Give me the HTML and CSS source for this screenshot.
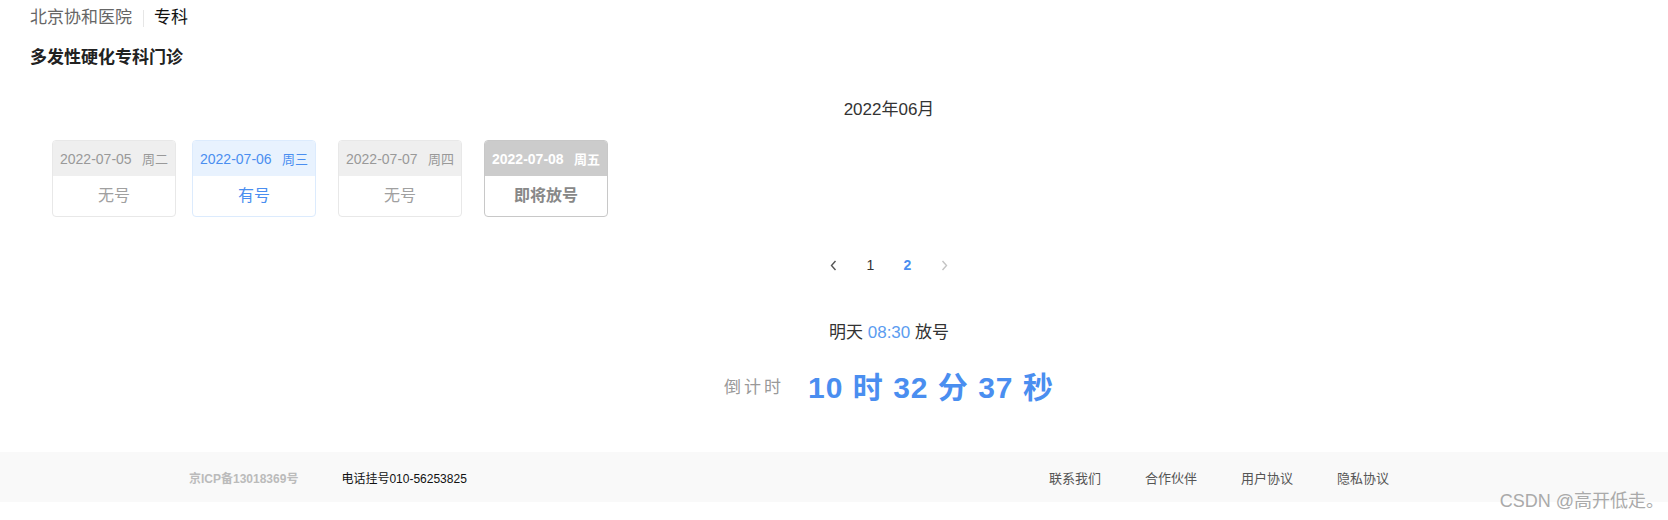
FILE: index.html
```html
<!DOCTYPE html>
<html lang="zh-CN">
<head>
<meta charset="utf-8">
<title>多发性硬化专科门诊</title>
<link rel="stylesheet" href="styles.css">
</head>
<body>
<div class="page">
  <div class="crumb">
    <span class="crumb-hosp">北京协和医院</span>
    <span class="crumb-sep"></span>
    <span class="crumb-dept">专科</span>
  </div>
  <h1 class="title">多发性硬化专科门诊</h1>

  <div class="center month">2022年06月</div>

  <div class="days">
    <div class="day off">
      <div class="day-head"><span class="date">2022-07-05</span><span class="wk">周二</span></div>
      <div class="day-body">无号</div>
    </div>
    <div class="day avail">
      <div class="day-head"><span class="date">2022-07-06</span><span class="wk">周三</span></div>
      <div class="day-body">有号</div>
    </div>
    <div class="day off">
      <div class="day-head"><span class="date">2022-07-07</span><span class="wk">周四</span></div>
      <div class="day-body">无号</div>
    </div>
    <div class="day soon">
      <div class="day-head"><span class="date">2022-07-08</span><span class="wk">周五</span></div>
      <div class="day-body">即将放号</div>
    </div>
  </div>

  <div class="center pager">
    <span class="pg pg-prev"><svg width="7" height="11" viewBox="0 0 7 11"><path d="M5.5 1 L1.5 5.5 L5.5 10" fill="none" stroke="currentColor" stroke-width="1.4"/></svg></span>
    <span class="pg">1</span>
    <span class="pg pg-on">2</span>
    <span class="pg pg-next"><svg width="7" height="11" viewBox="0 0 7 11"><path d="M1.5 1 L5.5 5.5 L1.5 10" fill="none" stroke="currentColor" stroke-width="1.4"/></svg></span>
  </div>

  <div class="center release">明天 <span class="release-time">08:30</span> 放号</div>
  <div class="center countdown">
    <span class="cd-label">倒计时</span>
    <span class="cd-value">10 时 32 分 37 秒</span>
  </div>

  <footer class="footer">
    <span class="icp">京ICP备13018369号</span>
    <span class="phone">电话挂号010-56253825</span>
    <nav class="links">
      <a>联系我们</a>
      <a>合作伙伴</a>
      <a>用户协议</a>
      <a>隐私协议</a>
    </nav>
  </footer>
  <div class="watermark">CSDN @高开低走。</div>
</div>
</body>
</html>
```

FILE: styles.css
```css
* { box-sizing: border-box; }
html, body {
  margin: 0;
  padding: 0;
  background: #fff;
}
body {
  font-family: "Liberation Sans", "Noto Sans CJK SC", sans-serif;
  color: #333;
  font-size: 17px;
}
.page {
  position: relative;
  width: 1668px;
  height: 520px;
  overflow: hidden;
}
.crumb {
  display: flex;
  align-items: center;
  padding: 6px 30px 0;
  height: 30px;
  line-height: 24px;
  font-size: 17px;
}
.crumb-hosp { color: #666; }
.crumb-sep {
  width: 1px;
  height: 17px;
  background: #e6e6e6;
  margin: 0 10px 0 11px;
}
.crumb-dept { color: #111; }
.title {
  margin: 16px 0 0;
  padding: 0 30px;
  font-size: 17px;
  line-height: 24px;
  font-weight: bold;
  color: #222;
}
.center {
  padding-left: 110px;
  text-align: center;
}
.month {
  margin-top: 28px;
  line-height: 24px;
  color: #333;
}
.days {
  display: flex;
  gap: 22px;
  padding-left: 52px;
  margin-top: 18px;
}
.day {
  width: 124px;
  height: 77px;
  border: 1px solid #e8e8e8;
  border-radius: 4px;
  overflow: hidden;
  background: #fff;
}
.day:first-child { margin-right: -6px; }
.day-head {
  height: 35px;
  display: flex;
  align-items: center;
  justify-content: space-between;
  padding: 0 7px;
  background: #efefef;
  color: #999;
  font-size: 14px;
}
.wk { font-size: 13px; }
.day-body {
  height: 40px;
  line-height: 40px;
  text-align: center;
  font-size: 16px;
  color: #a0a0a0;
}
.avail { border-color: #dcebfd; }
.avail .day-head { background: #e8f2fe; color: #4a8ef0; }
.avail .day-body { color: #4a8ef0; }
.soon { border-color: #c8c8c8; }
.soon .day-head { background: #cccccc; color: #fff; font-weight: bold; }
.soon .day-body { color: #888; font-weight: bold; }
.pager {
  margin-top: 36px;
  display: flex;
  justify-content: center;
  align-items: center;
  height: 24px;
}
.pg {
  width: 37px;
  text-align: center;
  font-size: 14px;
  color: #333;
  line-height: 24px;
  display: flex;
  justify-content: center;
  align-items: center;
}
.pg-on { color: #4a8ef0; font-weight: bold; }
.pg-prev { color: #555; }
.pg-next { color: #c4c4c4; }
.release {
  margin-top: 44px;
  line-height: 24px;
  color: #333;
}
.release-time { color: #5b9cf0; }
.countdown {
  margin-top: 20px;
  height: 40px;
  display: flex;
  justify-content: center;
  align-items: center;
}
.cd-label {
  color: #999;
  letter-spacing: 3px;
  margin-right: 24px;
  font-size: 17px;
}
.cd-value {
  color: #4a8ef0;
  font-size: 30px;
  font-weight: bold;
  letter-spacing: 1px;
}
.footer {
  margin-top: 47px;
  height: 50px;
  background: #f9f9f9;
  display: flex;
  align-items: center;
  padding: 0 279px 0 189px;
  font-size: 12px;
}
.icp { color: #bbb; font-weight: bold; }
.phone { color: #111; margin-left: 43px; }
.links {
  margin-left: auto;
  display: flex;
  gap: 44px;
  font-size: 13px;
}
.links a { color: #555; }
.watermark {
  position: absolute;
  right: 4px;
  top: 491px;
  font-size: 18px;
  color: #aaa;
  line-height: 20px;
}
```
